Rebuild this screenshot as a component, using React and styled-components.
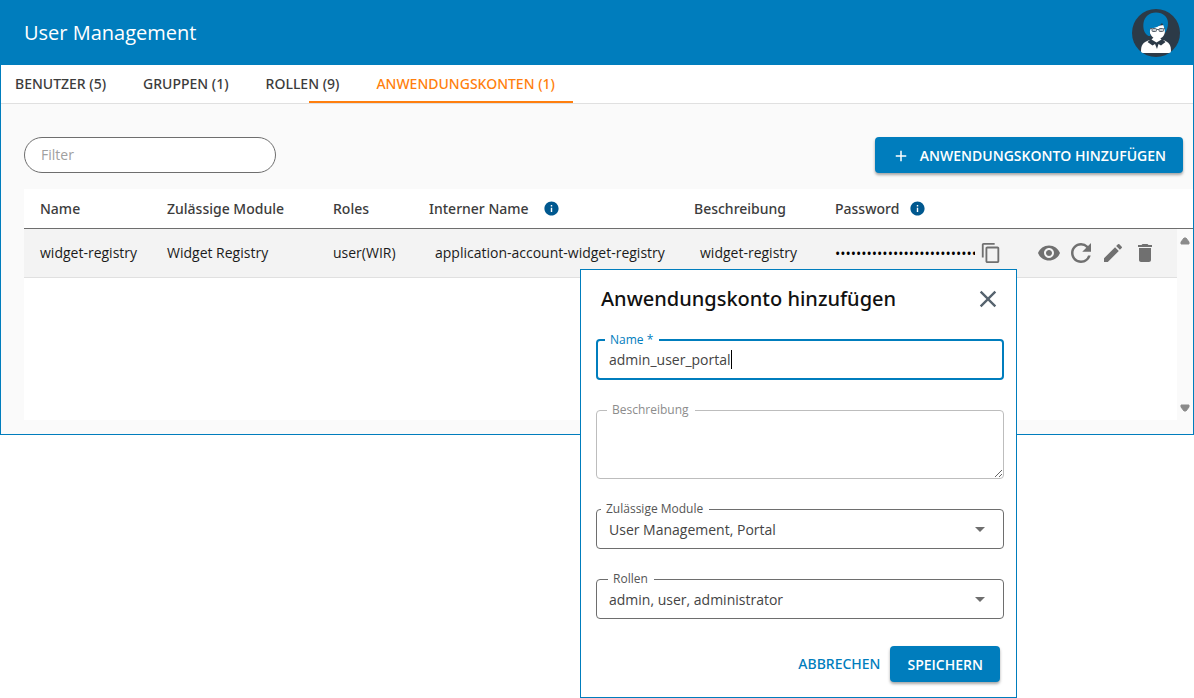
import React from "react";
import styled, { createGlobalStyle } from "styled-components";
import {
  MdAdd,
  MdClose,
  MdContentCopy,
  MdDelete,
  MdEdit,
  MdInfo,
  MdRefresh,
  MdVisibility,
} from "react-icons/md";

const blue = "#007dbd";
const mediumFont = `"Noto Sans", "Open Sans", sans-serif`;

const GlobalStyle = createGlobalStyle`
  *, *::before, *::after { box-sizing: border-box; }
  body {
    margin: 0;
    background: #fff;
    color: #1b1b1b;
    font-family: "Open Sans", "Noto Sans", sans-serif;
    font-size: 14px;
    line-height: 20px;
  }
  button, input, textarea, select { font: inherit; color: inherit; }
`;

const Page = styled.div`
  position: relative;
  min-height: 100vh;
`;

const Panel = styled.main`
  border: 1px solid ${blue};
  background: #fafafa;
`;

const Header = styled.header`
  display: flex;
  align-items: center;
  justify-content: space-between;
  height: 64px;
  padding: 0 12px 0 23px;
  background: ${blue};
  color: #fff;
`;

const AppTitle = styled.h1`
  margin: 0;
  font-size: 20px;
  line-height: 28px;
  font-weight: 400;
`;

const AvatarButton = styled.button`
  display: flex;
  padding: 0;
  border: 0;
  border-radius: 50%;
  background: none;
`;

const Tabs = styled.nav`
  display: flex;
  gap: 37px;
  height: 39px;
  padding-left: 14px;
  border-bottom: 1px solid #e0e0e0;
  background: #fff;
`;

const Tab = styled.a`
  position: relative;
  line-height: 38px;
  font-family: ${mediumFont};
  font-weight: 500;
  text-decoration: none;
  color: ${(p) => (p.$active ? "#ff7f0e" : "#3c3c3c")};

  &::after {
    content: "";
    display: ${(p) => (p.$active ? "block" : "none")};
    position: absolute;
    left: -67px;
    right: -18px;
    bottom: 0;
    height: 2px;
    background: #ff7f0e;
  }
`;

const Content = styled.section`
  padding: 33px 0 14px 23px;
`;

const Toolbar = styled.div`
  display: flex;
  justify-content: space-between;
  align-items: center;
  padding-right: 10px;
  margin-bottom: 16px;
`;

const FilterInput = styled.input`
  width: 252px;
  height: 36px;
  padding: 0 16px 2px;
  border: 1px solid #6e6e6e;
  border-radius: 18px;
  background: #fff;
  outline: none;

  &::placeholder { color: #a0a0a0; opacity: 1; }
`;

const PrimaryButton = styled.button`
  display: flex;
  align-items: center;
  gap: 10px;
  height: 36px;
  padding: 2px 17px 0;
  border: 0;
  border-radius: 4px;
  background: ${blue};
  color: #fff;
  font-weight: 600;
  box-shadow: 0 2px 3px rgba(0, 0, 0, 0.35);
`;

const TextButton = styled.button`
  height: 36px;
  padding: 0;
  border: 0;
  background: none;
  color: ${blue};
  font-family: ${mediumFont};
  font-weight: 500;
`;

const TableFrame = styled.div`
  position: relative;
  min-height: 231px;
  background: #fff;
`;

const Table = styled.table`
  width: 100%;
  table-layout: fixed;
  border-collapse: separate;
  border-spacing: 0;
`;

const Col = styled.col`
  width: ${(p) => p.$width};
`;

const Th = styled.th`
  height: 40px;
  padding: 0 0 0 16px;
  border-bottom: 1px solid #6e6e6e;
  text-align: left;
  white-space: nowrap;
  font-family: ${mediumFont};
  font-weight: 500;
  color: #3c3c3c;
`;

const HeadLabel = styled.span`
  display: flex;
  align-items: center;
  gap: ${(p) => p.$gap};
  color: #3c3c3c;
  svg { color: #00588f; }
`;

const Td = styled.td`
  height: 49px;
  padding: 0 0 0 ${(p) => p.$indent || "16px"};
  border-bottom: 1px solid #e0e0e0;
  background: #f3f3f3;
  white-space: nowrap;
`;

const PasswordCell = styled.div`
  display: flex;
  align-items: center;
  gap: 5px;
`;

const PasswordInput = styled.input`
  width: 140px;
  padding: 2px 0 0;
  border: 0;
  outline: none;
  background: none;
  color: #000;
`;

const Actions = styled.div`
  display: flex;
`;

const IconButton = styled.button`
  display: flex;
  align-items: center;
  justify-content: center;
  width: ${(p) => p.$width || "32px"};
  height: 32px;
  padding: 0;
  border: 0;
  background: none;
  color: ${(p) => p.$color || "#707070"};
`;

const Scrollbar = styled.div`
  position: absolute;
  top: 40px;
  right: 0;
  bottom: 0;
  width: 16px;
  display: flex;
  flex-direction: column;
  align-items: center;
  justify-content: space-between;
  padding: 8px 0;
  background: #fafafa;
`;

const Dialog = styled.form`
  position: absolute;
  top: 269px;
  right: 177px;
  width: 437px;
  padding: 12px 12px 15px 15px;
  border: 1px solid ${blue};
  background: #fff;
`;

const DialogHeader = styled.div`
  display: flex;
  align-items: center;
  justify-content: space-between;
  height: 34px;
  margin-bottom: 23px;
  padding-left: 5px;
`;

const DialogTitle = styled.h2`
  margin: 0;
  font-family: ${mediumFont};
  font-size: 20px;
  line-height: 28px;
  font-weight: 500;
  color: #111;
`;

const Fields = styled.div`
  display: grid;
  gap: 30px;
`;

const Field = styled.div`
  position: relative;
  display: flex;
  align-items: center;
  height: ${(p) => p.$height || "40px"};
  border: ${(p) => p.$line || "1px solid #6e6e6e"};
  border-radius: 4px;
  color: #444;
`;

const FieldLabel = styled.label`
  position: absolute;
  top: -9px;
  left: ${(p) => p.$left};
  padding: 0 6px 0 5px;
  background: #fff;
  font-size: 12px;
  line-height: 16px;
  color: ${(p) => p.$color || "#555"};
`;

const TextInput = styled.input`
  field-sizing: content;
  height: 24px;
  padding: 0 0 0 11px;
  border: 0;
  outline: none;
  background: none;
  caret-color: transparent;
`;

const Caret = styled.span`
  width: 1px;
  height: 19px;
  background: #000;
`;

const TextArea = styled.textarea`
  width: 100%;
  height: 100%;
  padding: 12px;
  border: 0;
  outline: none;
  background: none;
  resize: vertical;
`;

const Select = styled.select`
  width: 100%;
  height: 100%;
  padding: 2px 32px 0 12px;
  border: 0;
  outline: none;
  appearance: none;
  background: none;
`;

const SelectArrow = styled.svg`
  position: absolute;
  right: 18px;
  pointer-events: none;
`;

const DialogActions = styled.div`
  display: flex;
  justify-content: flex-end;
  gap: 10px;
  margin-top: 27px;
  padding-right: 4px;
`;

function Avatar() {
  return (
    <svg width="50" height="50" viewBox="0 0 50 50" aria-hidden="true">
      <circle cx="25" cy="25" r="24" fill="#2c3a47" />
      <path d="M19 19 L33 17 L34 23 C34 28 30 31 26.500 31 C22 31 19 27 18.500 23Z" fill="#fff" />
      <path
        d="M16 27 C12.500 24 12 19 12.500 15 C13.500 9 18 4.500 25 4.500 C32 4.500 37 9 37 15 C37 19 36 22 34 25 C34 21 33 18 31 15 C29 18 25 20 20 20.500 C18.500 22 18.500 25 19.500 28 C18 28 17 28 16 27Z"
        fill="#007dbd"
      />
      <g fill="#c9cdd1" stroke="#59636d" strokeWidth="1">
        <rect x="21" y="20.500" width="4.500" height="3" rx="1" />
        <rect x="28" y="20.500" width="4.500" height="3" rx="1" />
        <path d="M19 20.500h2M25.500 21.500h2.500M32.500 20.500h1.500" />
      </g>
      <path
        d="M10 43 C10 37 12 34 19 32 L32 32 C38 34 40 37 40 43 C40 45 38 45 37 45 H13 C11 45 10 44.500 10 43Z"
        fill="#fff"
      />
      <path d="M16.500 34 L20 31 H31 L34.500 34 L30 37.500 L27.500 36 L26 41 L24 36 L21.500 37.500Z" fill="#2c3a47" />
      <path d="M20.500 31.500 L25.500 34.500 L30.500 31.500 L28 29 H23Z" fill="#fff" />
    </svg>
  );
}

function Arrow({ down }) {
  return (
    <svg width="10" height="8" viewBox="0 0 10 8" aria-hidden="true">
      <path
        d={down ? "M1 1h8v2L6 7H4L1 3Z" : "M1 7h8V5L6 1H4L1 5Z"}
        fill="#8b8b8b"
        stroke="#8b8b8b"
        strokeLinejoin="round"
      />
    </svg>
  );
}

function SelectField({ id, label, left, value }) {
  return (
    <Field>
      <FieldLabel htmlFor={id} $left={left}>{label}</FieldLabel>
      <Select id={id} defaultValue={value}>
        <option>{value}</option>
      </Select>
      <SelectArrow width="10" height="5" viewBox="0 0 10 5" aria-hidden="true">
        <path d="M0 0h10L5 5Z" fill="#6e6e6e" />
      </SelectArrow>
    </Field>
  );
}

export default function App() {
  return (
    <Page>
      <GlobalStyle />
      <Panel>
        <Header>
          <AppTitle>User Management</AppTitle>
          <AvatarButton aria-label="Profil"><Avatar /></AvatarButton>
        </Header>
        <Tabs>
          <Tab href="#benutzer">BENUTZER (5)</Tab>
          <Tab href="#gruppen">GRUPPEN (1)</Tab>
          <Tab href="#rollen">ROLLEN (9)</Tab>
          <Tab href="#anwendungskonten" $active>ANWENDUNGSKONTEN (1)</Tab>
        </Tabs>
        <Content>
          <Toolbar>
            <FilterInput placeholder="Filter" aria-label="Filter" />
            <PrimaryButton>
              <MdAdd size={18} />
              ANWENDUNGSKONTO HINZUFÜGEN
            </PrimaryButton>
          </Toolbar>
          <TableFrame>
            <Table>
              <colgroup>
                <Col $width="127px" />
                <Col $width="166px" />
                <Col $width="96px" />
                <Col $width="265px" />
                <Col $width="141px" />
                <Col $width="214px" />
                <Col $width="auto" />
              </colgroup>
              <thead>
                <tr>
                  <Th>Name</Th>
                  <Th>Zulässige Module</Th>
                  <Th>Roles</Th>
                  <Th><HeadLabel $gap="14px">Interner Name<MdInfo size={17} /></HeadLabel></Th>
                  <Th>Beschreibung</Th>
                  <Th><HeadLabel $gap="10px">Password<MdInfo size={17} /></HeadLabel></Th>
                  <Th aria-label="Aktionen" />
                </tr>
              </thead>
              <tbody>
                <tr>
                  <Td>widget-registry</Td>
                  <Td>Widget Registry</Td>
                  <Td>user(WIR)</Td>
                  <Td $indent="22px">application-account-widget-registry</Td>
                  <Td $indent="22px">widget-registry</Td>
                  <Td>
                    <PasswordCell>
                      <PasswordInput
                        type="password"
                        readOnly
                        aria-label="Password"
                        value="abcdefghijklmnopqrstuvwxyz0123"
                      />
                      <IconButton type="button" $width="22px" aria-label="Kopieren"><MdContentCopy size={22} /></IconButton>
                    </PasswordCell>
                  </Td>
                  <Td $indent="0px">
                    <Actions>
                      <IconButton aria-label="Anzeigen"><MdVisibility size={24} /></IconButton>
                      <IconButton aria-label="Erneuern"><MdRefresh size={30} /></IconButton>
                      <IconButton aria-label="Bearbeiten"><MdEdit size={24} /></IconButton>
                      <IconButton aria-label="Löschen"><MdDelete size={24} /></IconButton>
                    </Actions>
                  </Td>
                </tr>
              </tbody>
            </Table>
            <Scrollbar>
              <Arrow />
              <Arrow down />
            </Scrollbar>
          </TableFrame>
        </Content>
      </Panel>

      <Dialog role="dialog" aria-labelledby="dialog-title">
        <DialogHeader>
          <DialogTitle id="dialog-title">Anwendungskonto hinzufügen</DialogTitle>
          <IconButton type="button" $color="#56636e" aria-label="Schließen"><MdClose size={28} /></IconButton>
        </DialogHeader>
        <Fields>
          <Field $height="41px" $line={`2px solid ${blue}`}>
            <FieldLabel htmlFor="name" $left="7px" $color={blue}>Name *</FieldLabel>
            <TextInput id="name" defaultValue="admin_user_portal" />
            <Caret />
          </Field>
          <Field $height="69px" $line="1px solid #bdbdbd">
            <FieldLabel htmlFor="beschreibung" $left="10px" $color="#8c8c8c">Beschreibung</FieldLabel>
            <TextArea id="beschreibung" />
          </Field>
          <SelectField id="module" label="Zulässige Module" left="4px" value="User Management, Portal" />
          <SelectField id="rollen" label="Rollen" left="11px" value="admin, user, administrator" />
        </Fields>
        <DialogActions>
          <TextButton type="button">ABBRECHEN</TextButton>
          <PrimaryButton type="button">SPEICHERN</PrimaryButton>
        </DialogActions>
      </Dialog>
    </Page>
  );
}
